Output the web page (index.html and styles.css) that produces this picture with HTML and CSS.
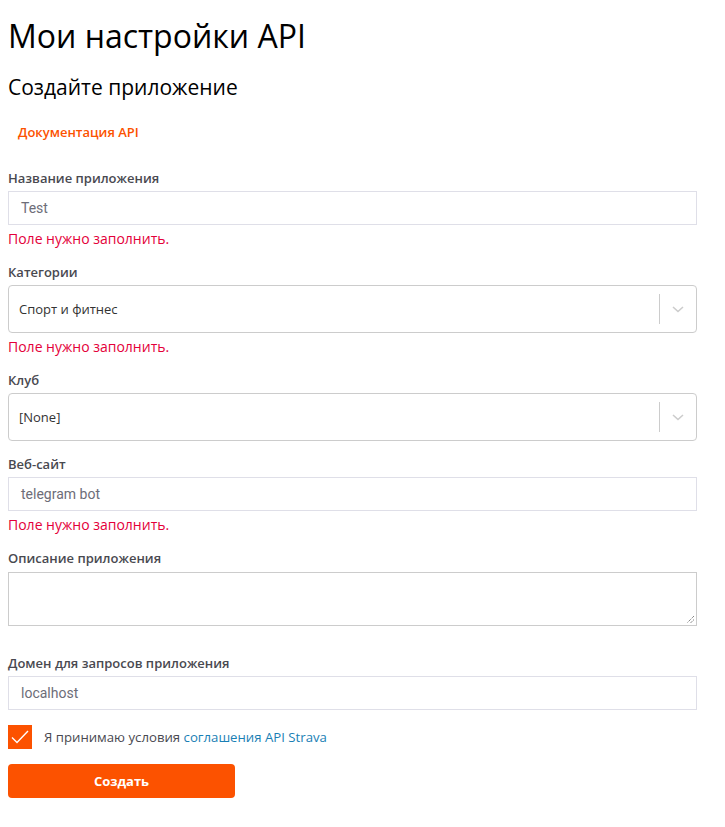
FILE: index.html
```html
<!DOCTYPE html>
<html lang="ru">
<head>
<meta charset="utf-8">
<title>Мои настройки API</title>
<link rel="stylesheet" href="styles.css">
</head>
<body>
<main class="page">
  <h1 class="title">Мои настройки API</h1>
  <h2 class="subtitle">Создайте приложение</h2>
  <a class="doc-link" href="#">Документация API</a>

  <form class="form">
    <div class="field">
      <label class="label">Название приложения</label>
      <div class="input">Test</div>
      <div class="error">Поле нужно заполнить.</div>
    </div>

    <div class="field">
      <label class="label">Категории</label>
      <div class="select">
        <span class="select-value">Спорт и фитнес</span>
        <span class="select-sep"></span>
        <span class="select-arrow">
          <svg width="14" height="10" viewBox="0 0 14 10"><path d="M2 3 L7 7.5 L12 3" fill="none" stroke="#cccccc" stroke-width="1.6"/></svg>
        </span>
      </div>
      <div class="error">Поле нужно заполнить.</div>
    </div>

    <div class="field">
      <label class="label">Клуб</label>
      <div class="select">
        <span class="select-value">[None]</span>
        <span class="select-sep"></span>
        <span class="select-arrow">
          <svg width="14" height="10" viewBox="0 0 14 10"><path d="M2 3 L7 7.5 L12 3" fill="none" stroke="#cccccc" stroke-width="1.6"/></svg>
        </span>
      </div>
    </div>

    <div class="field">
      <label class="label">Веб-сайт</label>
      <div class="input">telegram bot</div>
      <div class="error">Поле нужно заполнить.</div>
    </div>

    <div class="field">
      <label class="label label-wide">Описание приложения</label>
      <div class="textarea">
        <svg class="grip" width="10" height="10" viewBox="0 0 10 10"><path d="M9 2 L2 9 M9 5.5 L5.5 9" stroke="#555" stroke-width="1" stroke-dasharray="1 1"/></svg>
      </div>
    </div>

    <div class="field field-domain">
      <label class="label">Домен для запросов приложения</label>
      <div class="input">localhost</div>
    </div>

    <div class="agree">
      <span class="checkbox">
        <svg width="24" height="24" viewBox="0 0 24 24"><path d="M4 12.5 L9 17.5 L20 6" fill="none" stroke="#ffffff" stroke-width="1.4"/></svg>
      </span>
      <span class="agree-text">Я принимаю условия <a href="#" class="terms">соглашения API Strava</a></span>
    </div>

    <button type="button" class="submit">Создать</button>
  </form>
</main>
</body>
</html>
```

FILE: styles.css
```css
html, body {
  margin: 0;
  padding: 0;
  background: #ffffff;
}

.page {
  padding: 0 8px;
  width: 689px;
  font-family: "Open Sans", "Noto Sans", sans-serif;
  color: #000;
}

.title {
  font-size: 32px;
  font-weight: 400;
  line-height: 40px;
  margin: 16px 0 0 0;
}

.subtitle {
  font-size: 21px;
  font-weight: 400;
  line-height: 30px;
  margin: 16px 0 0 0;
}

.doc-link {
  display: inline-block;
  margin: 20px 0 0 10px;
  font-size: 13px;
  font-weight: 600;
  line-height: 20px;
  color: #fc5200;
  text-decoration: none;
}

.form {
  display: flex;
  flex-direction: column;
  margin-top: 27px;
}

.field {
  display: flex;
  flex-direction: column;
  margin-bottom: 14px;
}

.label {
  font-size: 13px;
  font-weight: 600;
  line-height: 18px;
  color: #494950;
  margin-bottom: 4px;
}

.label-wide {
  margin-bottom: 5px;
}

.input {
  height: 32px;
  border: 1px solid #dfdfe8;
  padding: 0 12px;
  display: flex;
  align-items: center;
  font-family: Roboto, "Noto Sans", sans-serif;
  font-size: 14px;
  color: #6d6d78;
}

.error {
  font-family: "Open Sans", "Noto Sans", sans-serif;
  font-size: 14px;
  line-height: 20px;
  color: #e4003a;
  margin-top: 4px;
}

.select {
  height: 46px;
  border: 1px solid #cccccc;
  border-radius: 4px;
  display: flex;
  align-items: center;
  padding-left: 10px;
}

.select-value {
  flex: 1;
  font-size: 13px;
  color: #333333;
}

.select-sep {
  width: 1px;
  height: 30px;
  background: #cccccc;
}

.select-arrow {
  width: 36px;
  display: flex;
  justify-content: center;
  align-items: center;
}

.textarea {
  height: 52px;
  border: 1px solid #cccccc;
  position: relative;
}

.grip {
  position: absolute;
  right: 1px;
  bottom: 1px;
}

.field-domain {
  margin-top: 14px;
  margin-bottom: 15px;
}

.agree {
  display: flex;
  align-items: center;
}

.checkbox {
  width: 24px;
  height: 24px;
  background: #fc5200;
  display: flex;
}

.agree-text {
  margin-left: 12px;
  font-size: 13.2px;
  color: #494950;
}

.terms {
  color: #1a7fb5;
  text-decoration: none;
}

.submit {
  margin-top: 15px;
  width: 227px;
  height: 34px;
  border: none;
  border-radius: 4px;
  background: #fc5200;
  color: #ffffff;
  font-family: "Open Sans", "Noto Sans", sans-serif;
  font-size: 13px;
  font-weight: 700;
  cursor: pointer;
}
```
